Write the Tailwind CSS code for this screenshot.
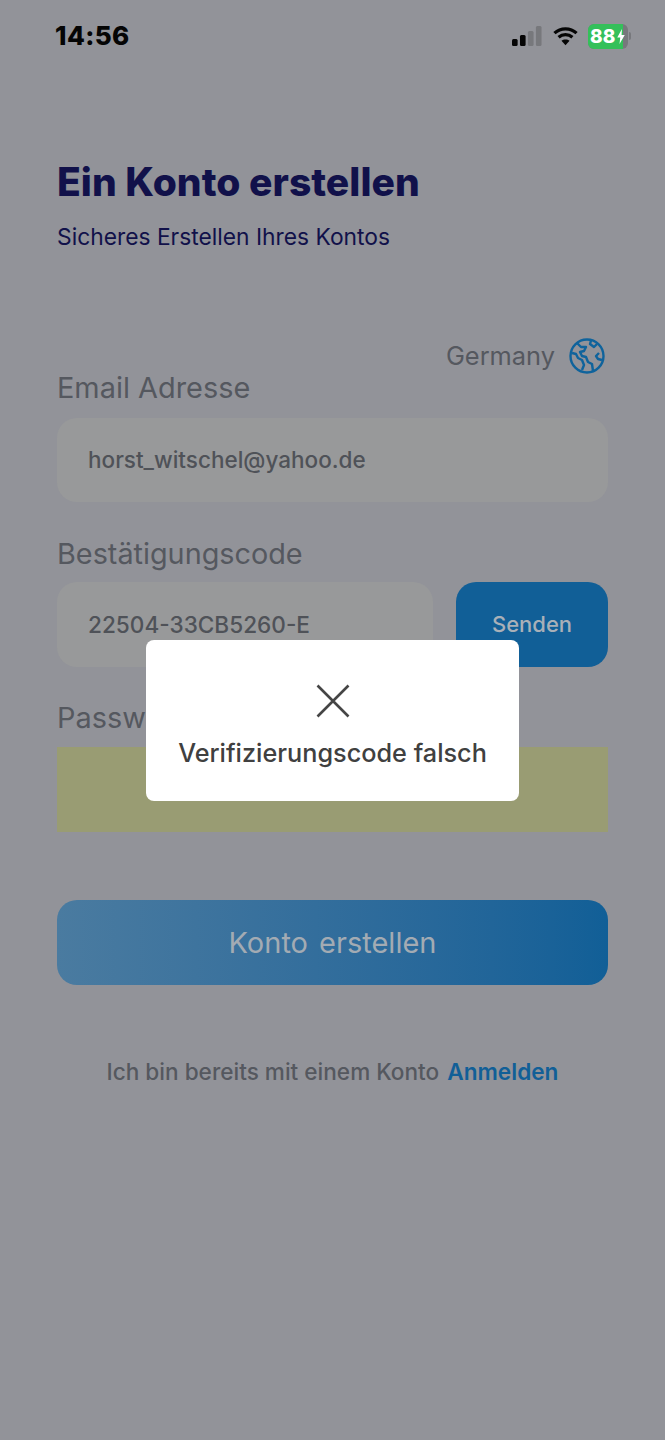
<!doctype html>
<html lang="en">
    <head>
        <meta charset="UTF-8" />
        <meta name="viewport" content="width=device-width, initial-scale=1.0" />
        <title>Ein Konto erstellen</title>
        <script src="https://cdn.jsdelivr.net/npm/@tailwindcss/browser@4"></script>
    </head>
    <body class="bg-[#929399] font-['Inter',sans-serif]">
        <div class="relative h-[1440px] w-[665px] overflow-hidden bg-[#929399]">
            <!-- Status bar -->
            <div class="flex h-[72px] items-center justify-between pl-[55px] pr-[34px]">
                <span class="text-[26px] leading-none font-extrabold tracking-[0.4px] text-[#050505]">14:56</span>
                <div class="flex items-center">
                    <svg width="30" height="20" viewBox="0 0 32 20" preserveAspectRatio="none" class="mr-[11px]">
                        <rect x="0" y="13" width="6" height="7" rx="1.5" fill="#050505" />
                        <rect x="8.5" y="9" width="6" height="11" rx="1.5" fill="#050505" />
                        <rect x="17" y="5" width="6" height="15" rx="1.5" fill="#77787c" />
                        <rect x="25.5" y="0" width="6" height="20" rx="1.5" fill="#77787c" />
                    </svg>
                    <svg width="25" height="20" viewBox="0 0 26 20" class="mr-[10px]" fill="none" stroke="#050505" stroke-width="3.4">
                        <path d="M1.5 7 C8 1 18 1 24.5 7" />
                        <path d="M5.8 11.2 C10 7.6 16 7.6 20.2 11.2" />
                        <path d="M13 19.5 L8.8 15 C11 13.2 15 13.2 17.2 15 Z" fill="#050505" stroke="none" />
                    </svg>
                    <div class="flex h-[25px] w-[40px] items-center overflow-hidden rounded-[6px] bg-[#77787c]">
                        <div class="flex h-full w-[35px] shrink-0 items-center bg-[#34c05a] pl-[2px]">
                            <span class="text-[19px] leading-none font-extrabold tracking-[0.2px] text-white">88</span>
                        </div>
                        <svg width="8" height="15" viewBox="0 0 8 16" class="-ml-[6px] shrink-0" fill="#ffffff">
                            <path d="M5 0 L0 9 H3.2 L2.4 16 L8 6.5 H4.6 Z" />
                        </svg>
                    </div>
                    <div class="ml-[1px] h-[8px] w-[2px] rounded-r-sm bg-[#77787c]"></div>
                </div>
            </div>

            <div class="px-[57px]">
                <h1 class="mt-[87px] text-[39px] leading-[46px] font-extrabold tracking-[0.05px] text-[#11114a]">Ein Konto erstellen</h1>
                <p class="mt-[18px] text-[22.8px] leading-[28px] text-[#11114a]">Sicheres Erstellen Ihres Kontos</p>

                <div class="mt-[89px] flex h-[31px] items-center justify-end">
                    <span class="text-[25.4px] leading-none text-[#55585f]">Germany</span>
                    <svg width="36" height="36" viewBox="0 0 36 36" class="mr-[3px] ml-[14px] shrink-0" fill="none" stroke="#0f639c" stroke-width="2.4" stroke-linejoin="round">
                        <circle cx="18" cy="18" r="16.5" />
                        <path d="M8 5 L12 9 L17 9 L15 13 L11 14 L13 18 L17 19 L19 24 L23 26 L24 33" />
                        <path d="M3 15 L7 16 L9 20 L13 22 L15 27 L13 32" />
                        <path d="M22 2.5 L21 6 L25 9 L28 6" />
                        <path d="M30 15 L27 18 L29 21 L33 22" />
                    </svg>
                </div>

                <label class="block text-[28.9px] leading-[34px] text-[#55585f]">Email Adresse</label>
                <div class="mt-[13px] flex h-[84px] items-center rounded-[20px] bg-[#98999a] pl-[31px] text-[22.5px] font-medium text-[#4f5258]">horst_witschel@yahoo.de</div>

                <label class="mt-[35px] block text-[28.8px] leading-[34px] text-[#55585f]">Bestätigungscode</label>
                <div class="mt-[11px] flex gap-[23px]">
                    <div class="flex h-[85px] w-[376px] items-center rounded-[20px] bg-[#98999a] pl-[31px] text-[22.6px] font-medium text-[#4f5258]">22504-33CB5260-E</div>
                    <button class="h-[85px] w-[152px] rounded-[20px] bg-[#115f97] text-[22px] font-medium text-[#a9b0b8]">Senden</button>
                </div>

                <label class="mt-[34px] block text-[28.9px] leading-[34px] text-[#55585f]">Passwort</label>
                <div class="mt-[12px] h-[85px] bg-[#999c73]"></div>

                <button class="mt-[68px] h-[85px] w-full rounded-[20px] bg-linear-to-r from-[#4a7ba0] to-[#115f97] text-[29px] text-[#a3abb3] [word-spacing:3px]">Konto erstellen</button>

                <p class="mt-[73px] text-center text-[22.6px] leading-[28px] font-medium text-[#55585f]">Ich bin bereits mit einem Konto <a class="ml-[2px] font-semibold text-[#115f97]">Anmelden</a></p>
            </div>

            <!-- Error toast -->
            <div class="absolute top-[640px] left-[146px] flex h-[161px] w-[373px] flex-col items-center rounded-[8px] bg-white">
                <svg width="34" height="34" viewBox="0 0 34 34" class="mt-[44px]" fill="none" stroke="#454545" stroke-width="2.6">
                    <path d="M1.5 1.5 L32.5 32.5 M32.5 1.5 L1.5 32.5" />
                </svg>
                <span class="mt-[19px] text-[25.25px] leading-[32px] font-medium text-[#404040]">Verifizierungscode falsch</span>
            </div>
        </div>
    </body>
</html>
